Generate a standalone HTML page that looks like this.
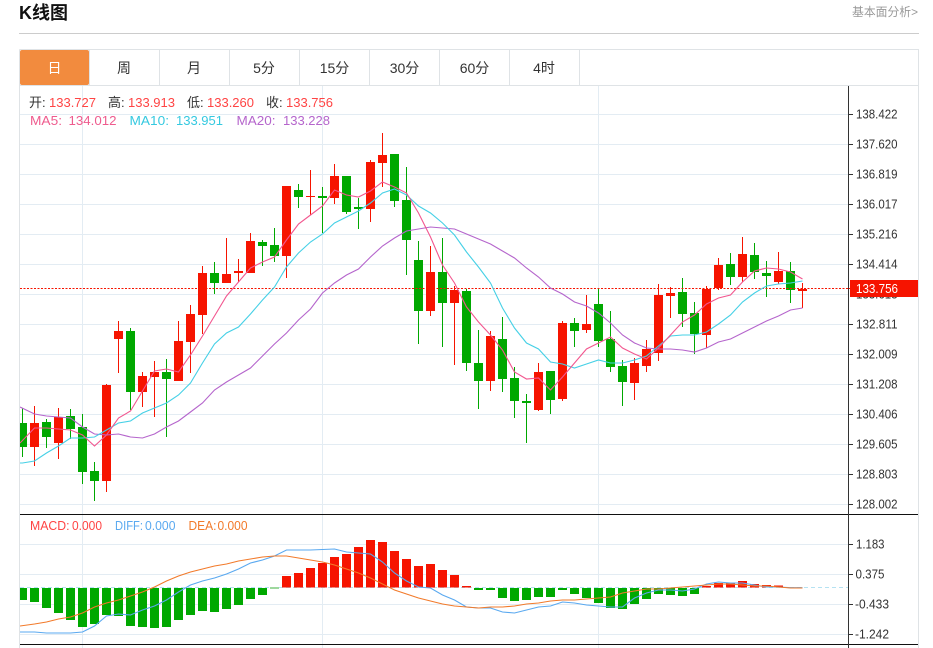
<!DOCTYPE html>
<html lang="zh">
<head>
<meta charset="utf-8">
<title>K线图</title>
<style>
html,body{margin:0;padding:0;background:#fff;width:933px;height:648px;overflow:hidden}
svg{display:block;font-family:"Liberation Sans","Noto Sans CJK SC",sans-serif}
</style>
</head>
<body>
<svg width="933" height="648" viewBox="0 0 933 648" xmlns="http://www.w3.org/2000/svg">
<defs><clipPath id="c"><rect x="20" y="86" width="828" height="562"/></clipPath></defs>
<text x="19" y="19" font-size="18" font-weight="bold" fill="#111">K线图</text>
<text x="852" y="16" font-size="12" fill="#999" textLength="66" lengthAdjust="spacingAndGlyphs">基本面分析&gt;</text>
<path d="M19 33.5H919" stroke="#ccc" fill="none"/>

<!-- frame -->
<path d="M19.5 49.5H918.5V648M19.5 49.5V648M19.5 85.5H918.5" stroke="#dfe3e6" fill="none"/>
<path d="M89.5 50V85M159.5 50V85M229.5 50V85M299.5 50V85M369.5 50V85M439.5 50V85M509.5 50V85M579.5 50V85" stroke="#dfe3e6" fill="none"/>
<rect x="20" y="50" width="69" height="35" rx="2" fill="#f28b3e"/>
<g font-size="14" text-anchor="middle" fill="#333">
<text x="54.5" y="73" fill="#fff">日</text>
<text x="124" y="73">周</text>
<text x="194" y="73">月</text>
<text x="264" y="73">5分</text>
<text x="334.5" y="73">15分</text>
<text x="404.5" y="73">30分</text>
<text x="474.5" y="73">60分</text>
<text x="544" y="73">4时</text>
</g>

<!-- grid -->
<path d="M20 114.5H848M20 144.5H848M20 174.5H848M20 204.5H848M20 234.5H848M20 264.5H848M20 294.5H848M20 324.5H848M20 354.5H848M20 384.5H848M20 414.5H848M20 444.5H848M20 474.5H848M20 504.5H848M20 544.5H848M20 574.5H848M20 604.5H848M20 634.5H848M82.5 86V648M322.5 86V648M598.5 86V648" stroke="#e3ecf3" fill="none"/>

<g clip-path="url(#c)">
<!-- green wicks -->
<path stroke="#00a800" fill="none" d="M22.5 408V457M46.5 419V448M70.5 409V439M82.5 414V484M94.5 462V501M130.5 328V410M166.5 359V437M214.5 262V294M262.5 240V266M274.5 228V262M298.5 184V208M322.5 187V233M346.5 176V214M358.5 198V229M394.5 154V207M406.5 167V275M418.5 241V344M442.5 238V347M466.5 289V371M478.5 330V409M502.5 317V392M514.5 367V418M526.5 394V443M550.5 371V414M574.5 318V347M598.5 288V347M610.5 311V372M622.5 360V406M682.5 278V327M694.5 302V354M730.5 253V285M754.5 243V279M766.5 261V297M790.5 262V303"/>
<!-- green bodies -->
<path fill="#00a800" d="M18 423h9V447h-9zM42 422h9V437h-9zM66 416h9V429h-9zM78 427h9V472h-9zM90 471h9V481h-9zM126 331h9V392h-9zM162 372h9V379h-9zM210 273h9V283h-9zM258 242h9V246h-9zM270 245h9V256h-9zM294 190h9V197h-9zM318 196h9V198h-9zM342 176h9V212h-9zM354 207h9V209h-9zM390 154h9V201h-9zM402 200h9V240h-9zM414 260h9V311h-9zM438 272h9V303h-9zM462 291h9V363h-9zM474 363h9V381h-9zM498 339h9V379h-9zM510 378h9V401h-9zM522 401h9V403h-9zM546 371h9V400h-9zM570 323h9V331h-9zM594 304h9V341h-9zM606 339h9V367h-9zM618 366h9V382h-9zM678 292h9V314h-9zM690 313h9V334h-9zM726 264h9V277h-9zM750 255h9V272h-9zM762 273h9V276h-9zM786 271h9V290h-9z"/>
<!-- red wicks -->
<path stroke="#f61400" fill="none" d="M34.5 406V466M58.5 408V459M106.5 384V492M118.5 321V373M142.5 372V407M154.5 361V417M178.5 321V381M190.5 305V373M202.5 266V334M226.5 238V283M238.5 259V282M250.5 233V273M286.5 186V278M310.5 170V215M334.5 164V204M370.5 160V222M382.5 133V187M430.5 246V316M454.5 286V365M490.5 331V391M538.5 363V411M562.5 321V401M586.5 295V333M634.5 358V400M646.5 340V372M658.5 284V361M670.5 287V318M706.5 286V348M718.5 258V290M742.5 237V282M778.5 252V284M802.5 283V308"/>
<!-- red bodies -->
<path fill="#f61400" d="M30 423h9V447h-9zM54 417h9V443h-9zM102 385h9V481h-9zM114 331h9V339h-9zM138 376h9V392h-9zM150 372h9V377h-9zM174 341h9V381h-9zM186 314h9V342h-9zM198 273h9V315h-9zM222 274h9V283h-9zM234 271h9V273h-9zM246 241h9V273h-9zM282 186h9V256h-9zM306 196h9V197h-9zM330 176h9V198h-9zM366 162h9V209h-9zM378 155h9V163h-9zM426 272h9V311h-9zM450 290h9V303h-9zM486 336h9V381h-9zM534 372h9V410h-9zM558 323h9V399h-9zM582 324h9V330h-9zM630 363h9V383h-9zM642 349h9V366h-9zM654 295h9V353h-9zM666 293h9V296h-9zM702 289h9V335h-9zM714 265h9V288h-9zM738 254h9V277h-9zM774 271h9V282h-9zM798 289h9V291h-9z"/>

<!-- price line -->
<path d="M20 288.5H848" stroke="#f61400" stroke-dasharray="2 1.5" fill="none"/>

<!-- MA lines -->
<path fill="none" stroke="#b565cc" stroke-width="1.1" d="M20 407L34.5 414L46.5 416L58.5 417L70.5 418L82.5 427L94.5 434L106.5 435L118.5 434L130.5 437L142.5 438L154.5 434L166.5 427L178.5 421L190.5 412L202.5 403L214.5 390L226.5 382L238.5 375L250.5 368L262.5 356L274.5 344L286.5 333L298.5 320L310.5 309L322.5 293L334.5 283L346.5 275L358.5 269L370.5 257L382.5 246L394.5 238L406.5 231L418.5 229L430.5 227L442.5 228L454.5 229L466.5 234L478.5 239L490.5 244L502.5 251L514.5 258L526.5 268L538.5 277L550.5 288L562.5 294L574.5 302L586.5 306L598.5 313L610.5 323L622.5 335L634.5 343L646.5 348L658.5 349L670.5 349L682.5 350L694.5 352L706.5 348L718.5 342L730.5 339L742.5 333L754.5 327L766.5 321L778.5 316L790.5 310L802.5 308"/>
<path fill="none" stroke="#45d0e6" stroke-width="1.1" d="M20 463L22.5 463L34.5 461L46.5 453L58.5 446L70.5 438L82.5 438L94.5 437L106.5 430L118.5 423L130.5 421L142.5 413L154.5 408L166.5 403L178.5 395L190.5 383L202.5 363L214.5 344L226.5 333L238.5 327L250.5 314L262.5 300L274.5 287L286.5 267L298.5 253L310.5 242L322.5 234L334.5 223L346.5 217L358.5 211L370.5 203L382.5 193L394.5 189L406.5 195L418.5 206L430.5 213L442.5 223L454.5 235L466.5 252L478.5 267L490.5 283L502.5 308L514.5 328L526.5 343L538.5 349L550.5 362L562.5 364L574.5 368L586.5 364L598.5 360L610.5 363L622.5 363L634.5 360L646.5 356L658.5 346L670.5 336L682.5 335L694.5 335L706.5 332L718.5 324L730.5 315L742.5 302L754.5 293L766.5 286L778.5 284L790.5 283L802.5 281"/>
<path fill="none" stroke="#f2578f" stroke-width="1.1" d="M20 443L34.5 428L46.5 428L58.5 429L70.5 430L82.5 435L94.5 446L106.5 435L118.5 418L130.5 411L142.5 391L154.5 371L166.5 369L178.5 372L190.5 355L202.5 336L214.5 316L226.5 296L238.5 282L250.5 268L262.5 262L274.5 257L286.5 240L298.5 224L310.5 215L322.5 206L334.5 190L346.5 195L358.5 197L370.5 191L382.5 182L394.5 187L406.5 193L418.5 213L430.5 237L442.5 265L454.5 283L466.5 307L478.5 322L490.5 335L502.5 350L514.5 372L526.5 379L538.5 378L550.5 390L562.5 377L574.5 363L586.5 349L598.5 343L610.5 337L622.5 348L634.5 354L646.5 359L658.5 348L670.5 335L682.5 322L694.5 315L706.5 304L718.5 298L730.5 295L742.5 282L754.5 271L766.5 268L778.5 269L790.5 272L802.5 279"/>

<!-- MACD zero line -->
<path d="M20 587.5H848" stroke="#b5e2f2" stroke-dasharray="4 3" fill="none"/>
<!-- MACD bars -->
<path fill="#00a800" d="M18 588h9V600h-9zM30 588h9V602h-9zM42 588h9V608h-9zM54 588h9V613h-9zM66 588h9V620h-9zM78 588h9V627h-9zM90 588h9V624h-9zM102 588h9V615h-9zM114 588h9V616h-9zM126 588h9V626h-9zM138 588h9V627h-9zM150 588h9V628h-9zM162 588h9V627h-9zM174 588h9V620h-9zM186 588h9V615h-9zM198 588h9V611h-9zM210 588h9V612h-9zM222 588h9V609h-9zM234 588h9V605h-9zM246 588h9V599h-9zM258 588h9V595h-9zM474 588h9V590h-9zM486 588h9V590h-9zM498 588h9V598h-9zM510 588h9V601h-9zM522 588h9V600h-9zM534 588h9V597h-9zM546 588h9V597h-9zM558 588h9V590h-9zM570 588h9V594h-9zM582 588h9V598h-9zM594 588h9V603h-9zM606 588h9V608h-9zM618 588h9V609h-9zM630 588h9V604h-9zM642 588h9V599h-9zM654 588h9V594h-9zM666 588h9V595h-9zM678 588h9V596h-9zM690 588h9V594h-9z"/>
<path fill="#9ed89e" d="M270 587h9v2h-9z"/>
<path fill="#f61400" d="M282 576h9V587.5h-9zM294 573h9V587.5h-9zM306 568h9V587.5h-9zM318 563h9V587.5h-9zM330 557h9V587.5h-9zM342 554h9V587.5h-9zM354 547h9V587.5h-9zM366 540h9V587.5h-9zM378 542h9V587.5h-9zM390 551h9V587.5h-9zM402 559h9V587.5h-9zM414 566h9V587.5h-9zM426 564h9V587.5h-9zM438 570h9V587.5h-9zM450 575h9V587.5h-9zM462 586h9V587.5h-9zM702 586h9V587.5h-9zM714 583h9V587.5h-9zM726 583h9V587.5h-9zM738 581h9V587.5h-9zM750 584h9V587.5h-9zM762 585h9V587.5h-9zM774 585.5h9V587.5h-9z"/>
<!-- DIFF / DEA -->
<path fill="none" stroke="#5aa9f0" stroke-width="1.1" d="M20 632L34.5 632L46.5 633L58.5 633L70.5 633L82.5 632L94.5 626L106.5 616L118.5 614L130.5 615L142.5 610L154.5 606L166.5 600L178.5 592L190.5 585L202.5 581L214.5 578L226.5 574L238.5 569L250.5 563L262.5 560L274.5 556L286.5 550L298.5 550L310.5 550L334.5 549L346.5 552L358.5 553L370.5 554L382.5 562L394.5 573L406.5 581L418.5 587L430.5 588L442.5 595L454.5 600L466.5 607L478.5 608L490.5 608L502.5 612L514.5 613L526.5 610L538.5 607L550.5 606L562.5 602L574.5 603L586.5 605L598.5 606L610.5 607L622.5 607L634.5 598L646.5 593L658.5 590L670.5 590L682.5 591L694.5 589L706.5 584L718.5 582L730.5 583L742.5 583L754.5 585L766.5 587L778.5 587L790.5 587.7L802.5 587.7"/>
<path fill="none" stroke="#f27a2a" stroke-width="1.1" d="M20 626L34.5 624L46.5 622L58.5 619L70.5 617L82.5 613L94.5 607L106.5 603L118.5 600L130.5 596L142.5 592L154.5 587L166.5 581L178.5 576L190.5 572L202.5 569L214.5 566L226.5 564L238.5 561L250.5 559L262.5 557L274.5 556L286.5 556L298.5 558L310.5 560L322.5 562L334.5 565L346.5 569L358.5 573L370.5 578L382.5 584L394.5 590L406.5 594L418.5 598L430.5 601L442.5 604L454.5 606L466.5 607L478.5 608L490.5 607L502.5 607L514.5 606L526.5 604L538.5 603L550.5 601L562.5 600L574.5 600L586.5 599L598.5 598L610.5 597L622.5 593L634.5 591L646.5 589L658.5 589L670.5 588L682.5 587L694.5 586L706.5 585L718.5 584L730.5 584L742.5 585L754.5 586L766.5 586L778.5 587L790.5 588L802.5 588"/>
</g>

<!-- separators -->
<path d="M20 514.5H918M20 644.5H918" stroke="#111" fill="none"/>
<path d="M848.5 86V648" stroke="#333" fill="none"/>
<path d="M849 114.5h4M849 144.5h4M849 174.5h4M849 204.5h4M849 234.5h4M849 264.5h4M849 324.5h4M849 354.5h4M849 384.5h4M849 414.5h4M849 444.5h4M849 474.5h4M849 504.5h4M849 544.5h4M849 574.5h4M849 604.5h4M849 634.5h4" stroke="#333" fill="none"/>

<!-- legend -->
<g font-size="13">
<text x="29" y="107" fill="#333">开:</text><text x="49" y="107" fill="#f44">133.727</text>
<text x="108" y="107" fill="#333">高:</text><text x="128" y="107" fill="#f44">133.913</text>
<text x="187" y="107" fill="#333">低:</text><text x="207" y="107" fill="#f44">133.260</text>
<text x="266" y="107" fill="#333">收:</text><text x="286" y="107" fill="#f44">133.756</text>
<text x="30" y="125" fill="#ef5b8e" textLength="32" lengthAdjust="spacingAndGlyphs">MA5:</text><text x="68.5" y="125" fill="#ef5b8e" textLength="48" lengthAdjust="spacingAndGlyphs">134.012</text>
<text x="129.5" y="125" fill="#35c9e0" textLength="39.5" lengthAdjust="spacingAndGlyphs">MA10:</text><text x="176" y="125" fill="#35c9e0">133.951</text>
<text x="236.5" y="125" fill="#b565cc" textLength="39" lengthAdjust="spacingAndGlyphs">MA20:</text><text x="283" y="125" fill="#b565cc">133.228</text>
<text x="30" y="530" fill="#f44" textLength="39.5" lengthAdjust="spacingAndGlyphs">MACD:</text><text x="72" y="530" fill="#f44" textLength="30" lengthAdjust="spacingAndGlyphs">0.000</text>
<text x="115" y="530" fill="#5aa9f0" textLength="28" lengthAdjust="spacingAndGlyphs">DIFF:</text><text x="145" y="530" fill="#5aa9f0" textLength="30.5" lengthAdjust="spacingAndGlyphs">0.000</text>
<text x="188.5" y="530" fill="#f27a2a" textLength="28" lengthAdjust="spacingAndGlyphs">DEA:</text><text x="217.5" y="530" fill="#f27a2a" textLength="30" lengthAdjust="spacingAndGlyphs">0.000</text>
</g>

<!-- axis labels -->
<g font-size="12.5" fill="#333" lengthAdjust="spacingAndGlyphs">
<text x="856" y="118.5" textLength="41.5" lengthAdjust="spacingAndGlyphs">138.422</text>
<text x="856" y="148.5" textLength="41.5" lengthAdjust="spacingAndGlyphs">137.620</text>
<text x="856" y="178.5" textLength="41.5" lengthAdjust="spacingAndGlyphs">136.819</text>
<text x="856" y="208.5" textLength="41.5" lengthAdjust="spacingAndGlyphs">136.017</text>
<text x="856" y="238.5" textLength="41.5" lengthAdjust="spacingAndGlyphs">135.216</text>
<text x="856" y="268.5" textLength="41.5" lengthAdjust="spacingAndGlyphs">134.414</text>
<text x="856" y="298.5" textLength="41.5" lengthAdjust="spacingAndGlyphs">133.613</text>
<text x="856" y="328.5" textLength="41.5" lengthAdjust="spacingAndGlyphs">132.811</text>
<text x="856" y="358.5" textLength="41.5" lengthAdjust="spacingAndGlyphs">132.009</text>
<text x="856" y="388.5" textLength="41.5" lengthAdjust="spacingAndGlyphs">131.208</text>
<text x="856" y="418.5" textLength="41.5" lengthAdjust="spacingAndGlyphs">130.406</text>
<text x="856" y="448.5" textLength="41.5" lengthAdjust="spacingAndGlyphs">129.605</text>
<text x="856" y="478.5" textLength="41.5" lengthAdjust="spacingAndGlyphs">128.803</text>
<text x="856" y="508.5" textLength="41.5" lengthAdjust="spacingAndGlyphs">128.002</text>
<text x="856" y="548.5" textLength="28.5" lengthAdjust="spacingAndGlyphs">1.183</text>
<text x="855.5" y="578.5" textLength="29" lengthAdjust="spacingAndGlyphs">0.375</text>
<text x="855" y="608.5" textLength="34" lengthAdjust="spacingAndGlyphs">-0.433</text>
<text x="855" y="638.5" textLength="34" lengthAdjust="spacingAndGlyphs">-1.242</text>
</g>
<rect x="850" y="280" width="68" height="17" fill="#f61400"/>
<path d="M849 288.5h4" stroke="#f61400"/>
<text x="856" y="293" font-size="13" fill="#fff" textLength="42" lengthAdjust="spacingAndGlyphs">133.756</text>
</svg>
</body>
</html>
